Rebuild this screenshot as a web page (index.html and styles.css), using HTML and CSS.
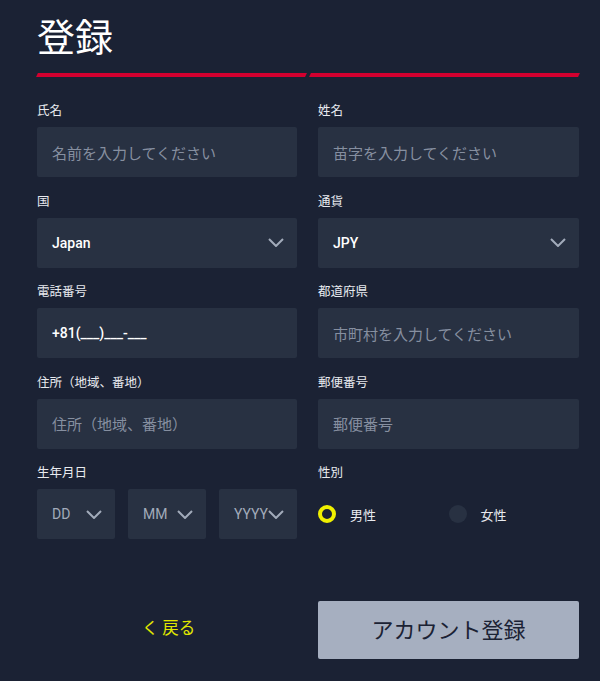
FILE: index.html
```html
<!DOCTYPE html>
<html lang="ja">

<head>
    <meta charset="UTF-8">
    <meta name="viewport" content="width=device-width, initial-scale=1.0">
    <title>登録</title>
    <link rel="stylesheet" href="styles.css">
</head>

<body>
    <div class="page">
        <h1 class="title">登録</h1>
        <div class="steps">
            <span class="step"></span>
            <span class="step"></span>
        </div>

        <form class="form">
            <div class="field">
                <label>氏名</label>
                <div class="box placeholder">名前を入力してください</div>
            </div>
            <div class="field">
                <label>姓名</label>
                <div class="box placeholder">苗字を入力してください</div>
            </div>

            <div class="field">
                <label>国</label>
                <div class="box select">
                    <span class="value">Japan</span>
                    <svg class="chevron" width="16" height="9" viewBox="0 0 16 9"><polyline points="1,1 8,8 15,1" /></svg>
                </div>
            </div>
            <div class="field">
                <label>通貨</label>
                <div class="box select">
                    <span class="value">JPY</span>
                    <svg class="chevron" width="16" height="9" viewBox="0 0 16 9"><polyline points="1,1 8,8 15,1" /></svg>
                </div>
            </div>

            <div class="field">
                <label>電話番号</label>
                <div class="box"><span class="value">+81(___)___-___</span></div>
            </div>
            <div class="field">
                <label>都道府県</label>
                <div class="box placeholder">市町村を入力してください</div>
            </div>

            <div class="field">
                <label>住所（地域、番地）</label>
                <div class="box placeholder">住所（地域、番地）</div>
            </div>
            <div class="field">
                <label>郵便番号</label>
                <div class="box placeholder">郵便番号</div>
            </div>

            <div class="field">
                <label>生年月日</label>
                <div class="dob">
                    <div class="box select small">
                        <span class="value dim">DD</span>
                        <svg class="chevron" width="16" height="9" viewBox="0 0 16 9"><polyline points="1,1 8,8 15,1" /></svg>
                    </div>
                    <div class="box select small">
                        <span class="value dim">MM</span>
                        <svg class="chevron" width="16" height="9" viewBox="0 0 16 9"><polyline points="1,1 8,8 15,1" /></svg>
                    </div>
                    <div class="box select small">
                        <span class="value dim">YYYY</span>
                        <svg class="chevron" width="16" height="9" viewBox="0 0 16 9"><polyline points="1,1 8,8 15,1" /></svg>
                    </div>
                </div>
            </div>
            <div class="field">
                <label>性別</label>
                <div class="gender">
                    <div class="radio"><span class="dot checked"></span>男性</div>
                    <div class="radio"><span class="dot"></span>女性</div>
                </div>
            </div>
        </form>

        <div class="actions">
            <a class="back" href="#">く 戻る</a>
            <button class="submit" type="button">アカウント登録</button>
        </div>
    </div>
</body>

</html>
```

FILE: styles.css
```css
body {
    margin: 0;
    padding: 0;
    background-color: #1b2234;
    font-family: 'Noto Sans CJK JP', sans-serif;
    color: #e8eaef;
}

.page {
    width: 542px;
    padding-left: 37px;
}

.title {
    margin: 0;
    padding-top: 13px;
    font-size: 38px;
    font-weight: normal;
    line-height: 44px;
    color: #fff;
}

.steps {
    display: grid;
    grid-template-columns: 1fr 1fr;
    column-gap: 4px;
    margin-top: 16px;
}

.step {
    display: block;
    height: 4px;
    background-color: #d3002f;
    transform: skewX(-25deg);
}

.form {
    display: grid;
    grid-template-columns: 260px 261px;
    column-gap: 21px;
    row-gap: 14.5px;
    margin-top: 24px;
}

.field label {
    display: block;
    font-size: 12.5px;
    line-height: 18px;
    margin-bottom: 8px;
}

.box {
    display: flex;
    align-items: center;
    height: 50px;
    padding: 0 13px 0 15px;
    background-color: #283142;
    border-radius: 2px;
    box-sizing: border-box;
}

.placeholder {
    font-size: 15px;
    color: #868fa0;
}

.select {
    justify-content: space-between;
}

.value {
    font-family: Roboto, 'Noto Sans CJK JP', sans-serif;
    font-size: 14px;
    font-weight: 500;
    color: #fff;
}

.value.dim {
    font-weight: normal;
    color: #a2abba;
}

.chevron polyline {
    fill: none;
    stroke: #a2abba;
    stroke-width: 2;
}

.dob {
    display: grid;
    grid-template-columns: repeat(3, 78px);
    column-gap: 13px;
}

.gender {
    display: grid;
    grid-template-columns: 1fr 1fr;
    height: 50px;
    align-items: center;
}

.radio {
    display: flex;
    align-items: center;
    gap: 14px;
    font-size: 13px;
}

.dot {
    width: 18px;
    height: 18px;
    border-radius: 50%;
    background-color: #283142;
    box-sizing: border-box;
}

.dot.checked {
    background-color: transparent;
    border: 4px solid #f0f000;
}

.actions {
    display: grid;
    grid-template-columns: 260px 261px;
    column-gap: 21px;
    margin-top: 62px;
}

.back {
    align-self: center;
    padding-left: 105px;
    padding-bottom: 6px;
    font-size: 16.5px;
    color: #e1e800;
    text-decoration: none;
}

.submit {
    height: 58px;
    padding: 0 0 4px;
    border: none;
    border-radius: 2px;
    background-color: #a6afc0;
    color: #1b2234;
    font-family: 'Noto Sans CJK JP', sans-serif;
    font-size: 22px;
}
```
